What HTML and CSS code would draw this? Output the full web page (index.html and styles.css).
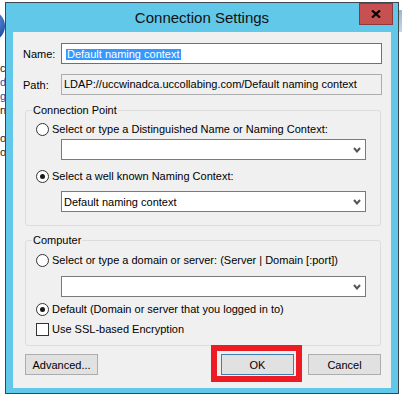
FILE: index.html
```html
<!DOCTYPE html>
<html lang="en">
<head>
    <meta charset="UTF-8">
    <title>Connection Settings</title>
    <link rel="stylesheet" href="styles.css">
</head>
<body>
    <div class="desk">
        <div class="desk-icon"></div>
        <div class="desk-lines">
            <div>c</div>
            <div class="link">d</div>
            <div class="link">g</div>
            <div>n</div>
            <div>&nbsp;</div>
            <div>o</div>
            <div>o</div>
        </div>
    </div>
    <div class="desk-edge"></div>

    <div class="dialog">
        <div class="titlebar">
            <span></span>
            <div class="title">Connection Settings</div>
            <div class="close">
                <svg width="10" height="8" viewBox="0 0 10 8">
                    <path d="M1 0.5 L9 7.5 M9 0.5 L1 7.5" stroke="#000" stroke-width="2.2" fill="none"/>
                </svg>
            </div>
        </div>
        <div class="client">
            <div class="field-row">
                <label>Name:</label>
                <div class="textbox focused"><span class="sel">Default naming context</span></div>
            </div>
            <div class="field-row">
                <label>Path:</label>
                <div class="textbox">LDAP://uccwinadca.uccollabing.com/Default naming context</div>
            </div>

            <div class="group first">
                <div class="group-title">Connection Point</div>
                <div class="option" style="margin-top: 6px"><span class="radio"></span>Select or type a Distinguished Name or Naming Context:</div>
                <div class="combo" style="margin-top: 3px">
                    <span></span>
                    <svg width="8" height="6" viewBox="0 0 8 6"><path d="M1 1 L4 4.5 L7 1" stroke="#555" stroke-width="2" fill="none"/></svg>
                </div>
                <div class="option" style="margin-top: 10px"><span class="radio checked"></span>Select a well known Naming Context:</div>
                <div class="combo" style="margin-top: 8px">
                    <span>Default naming context</span>
                    <svg width="8" height="6" viewBox="0 0 8 6"><path d="M1 1 L4 4.5 L7 1" stroke="#555" stroke-width="2" fill="none"/></svg>
                </div>
            </div>

            <div class="group second">
                <div class="group-title">Computer</div>
                <div class="option" style="margin-top: 7px"><span class="radio"></span>Select or type a domain or server: (Server | Domain [:port])</div>
                <div class="combo" style="margin-top: 9px">
                    <span></span>
                    <svg width="8" height="6" viewBox="0 0 8 6"><path d="M1 1 L4 4.5 L7 1" stroke="#555" stroke-width="2" fill="none"/></svg>
                </div>
                <div class="option" style="margin-top: 6px"><span class="radio checked"></span>Default (Domain or server that you logged in to)</div>
                <div class="option" style="margin-top: 7px"><span class="check"></span>Use SSL-based Encryption</div>
            </div>

            <div class="buttons">
                <div class="btn">Advanced...</div>
                <div class="btn default">OK</div>
                <div class="btn cancel">Cancel</div>
            </div>
        </div>
    </div>
</body>
</html>
```

FILE: styles.css
```css
* {
    box-sizing: border-box;
}
body {
    margin: 0;
    width: 402px;
    height: 401px;
    overflow: hidden;
    position: relative;
    background: #fff;
    font-family: "Liberation Sans", Arial, sans-serif;
    font-size: 11px;
    color: #000;
}

/* desktop behind the window */
.desk {
    padding-top: 10px;
}
.desk-icon {
    width: 32px;
    height: 32px;
    margin-left: -27px;
    border-radius: 50%;
    background: radial-gradient(circle at 60% 35%, #6d9be0, #1f4fa8 60%, #163a80);
}
.desk-lines {
    margin-top: 19px;
    font-size: 11px;
    line-height: 14px;
    color: #222;
    white-space: nowrap;
}
.desk-lines .link {
    color: #2b4aa0;
}
.desk-edge {
    position: absolute;
    right: 0;
    top: 10px;
    width: 3px;
    height: 22px;
    background: linear-gradient(#9fb4cf, #c9d6e6);
}

/* window */
.dialog {
    position: absolute;
    left: 5px;
    top: 2px;
    width: 394px;
    height: 392px;
    border: 1px solid #3d4750;
    background: #62c8ea;
    padding-bottom: 5px;
    display: flex;
    flex-direction: column;
}
.titlebar {
    height: 29px;
    display: grid;
    grid-template-columns: 1fr auto 1fr;
}
.title {
    font-size: 15px;
    line-height: 29px;
    color: #111;
}
.close {
    justify-self: end;
    margin-right: 5px;
    width: 34px;
    height: 22px;
    background: #c75050;
    border: 1px solid #8a3a3a;
    display: flex;
    align-items: center;
    justify-content: center;
}
.client {
    flex: 1;
    margin: 0 7px;
    background: #f0f0f0;
    padding: 11px 0 0 10px;
}

.field-row {
    display: flex;
    align-items: center;
    height: 21px;
    margin-bottom: 10px;
}
.field-row label {
    width: 38px;
}
.textbox {
    width: 321px;
    height: 21px;
    border: 1px solid #adadad;
    padding-left: 2px;
    line-height: 19px;
    white-space: nowrap;
    overflow: hidden;
}
.textbox.focused {
    background: #fff;
    border-color: #3c7fb1;
    padding-left: 4px;
}
.sel {
    display: inline-block;
    line-height: 11px;
    padding: 0 1px;
    background: #3399ff;
    color: #fff;
    vertical-align: middle;
}

.group {
    width: 356px;
    margin-left: 2px;
    border: 1px solid #dcdcdc;
    border-radius: 3px;
}
.group.first {
    margin-top: 15px;
    padding-bottom: 13px;
}
.group.second {
    margin-top: 14px;
    padding-bottom: 9px;
}
.group-title {
    display: table;
    margin: -7px 0 0 6px;
    padding: 0 1px;
    line-height: 13px;
    background: #f0f0f0;
}
.option {
    display: flex;
    align-items: center;
    height: 13px;
    line-height: 13px;
    padding-left: 10px;
    white-space: nowrap;
}
.radio, .check {
    width: 13px;
    height: 13px;
    margin-right: 3px;
    border: 1px solid #333;
    background: #fff;
    flex: none;
    display: flex;
    align-items: center;
    justify-content: center;
}
.radio {
    border-radius: 50%;
}
.radio.checked::after {
    content: "";
    width: 5px;
    height: 5px;
    border-radius: 50%;
    background: #1a1a1a;
}
.combo {
    width: 305px;
    height: 21px;
    margin-left: 35px;
    border: 1px solid #7a7a7a;
    background: #fff;
    display: flex;
    align-items: center;
    justify-content: space-between;
    padding: 0 4px 0 2px;
}

.buttons {
    display: flex;
    margin-top: 8px;
    padding: 0 10px 0 2px;
}
.btn {
    width: 73px;
    height: 21px;
    border: 1px solid #adadad;
    background: #e1e1e1;
    display: flex;
    align-items: center;
    justify-content: center;
}
.btn.default {
    position: relative;
    margin-left: auto;
    border-color: #3c7fb1;
}
.btn.default::after {
    content: "";
    position: absolute;
    left: -11px;
    top: -10px;
    right: -9px;
    bottom: -8px;
    border: 6px solid #ed1c24;
}
.btn.cancel {
    margin-left: 14px;
}
```
